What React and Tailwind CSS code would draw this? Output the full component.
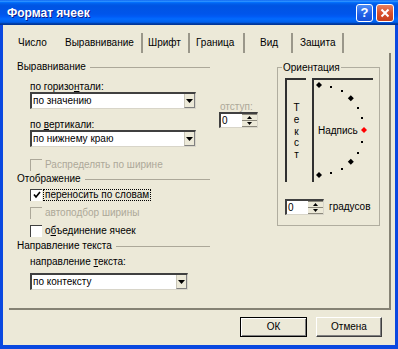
import React from "react";

const Tri = ({ up }) => (
  <svg width="7" height="4" viewBox="0 0 7 4" className="block">
    {up ? <polygon points="3.5,0 7,4 0,4" fill="#000" /> : <polygon points="0,0 7,0 3.5,4" fill="#000" />}
  </svg>
);

const SmallTri = ({ up }) => (
  <svg width="5" height="3" viewBox="0 0 5 3" className="block">
    {up ? <polygon points="2.5,0 5,3 0,3" fill="#000" /> : <polygon points="0,0 5,0 2.5,3" fill="#000" />}
  </svg>
);

const Dropdown = ({ w, text }) => (
  <div className={`${w} h-[17px] flex items-stretch bg-white border-l-2 border-t-2 border-r border-b border-l-[#404040] border-t-[#404040] border-r-[#d8d5c9] border-b-[#d8d5c9]`}>
    <span className="flex-1 flex items-center pl-[1px]">{text}</span>
    <div className="w-[11px] flex items-center justify-center bg-[#ECE9D8] border-l border-l-[#c9c6b8] border-b border-b-[#808080] border-r border-r-[#808080]">
      <Tri />
    </div>
  </div>
);

const Spin = ({ w }) => (
  <div className={`${w} h-[16px] flex items-stretch bg-white border-l-2 border-t-2 border-r border-b border-l-[#404040] border-t-[#404040] border-r-[#d8d5c9] border-b-[#d8d5c9]`}>
    <span className="flex-1 flex items-center pl-[1px]">0</span>
    <div className="w-[15px] flex flex-col bg-[#ECE9D8]">
      <div className="flex-1 flex items-center justify-center border-t border-[#8d8a7d]">
        <SmallTri up />
      </div>
      <div className="flex-1 flex items-center justify-center border-t border-b border-[#8d8a7d]">
        <SmallTri />
      </div>
    </div>
  </div>
);

const Heading = ({ children, mt }) => (
  <div className={`${mt} h-[14px] flex items-center`}>
    <span>{children}</span>
    <div className="flex-1 h-px bg-[#aca899] ml-[4px]" />
  </div>
);

const CheckBox = ({ checked, disabled }) => (
  <div className={`w-[12px] h-[12px] flex items-center justify-center border-l border-t ${disabled ? "border-[#aca899] bg-[#ECE9D8]" : "border-[#404040] bg-white"}`}>
    {checked && (
      <svg width="8" height="8" viewBox="0 0 8 8">
        <path d="M1 3.5 L3 6 L7 1" stroke="#000" strokeWidth="1.7" fill="none" />
      </svg>
    )}
  </div>
);

const Dial = () => {
  const pts = [];
  for (let a = 90; a >= -90; a -= 15) {
    const r = (a * Math.PI) / 180;
    pts.push({ a, x: 5 + 45 * Math.cos(r), y: 50 - 45 * Math.sin(r) });
  }
  return (
    <svg className="absolute inset-0" width="59" height="102" viewBox="0 0 59 102">
      {pts.map((p) => {
        if (p.a === 0)
          return <polygon key={p.a} points={`${p.x},${p.y - 3} ${p.x + 3},${p.y} ${p.x},${p.y + 3} ${p.x - 3},${p.y}`} fill="#ff0000" />;
        if (p.a % 45 === 0)
          return <polygon key={p.a} points={`${p.x},${p.y - 3} ${p.x + 3},${p.y} ${p.x},${p.y + 3} ${p.x - 3},${p.y}`} fill="#000" />;
        return <rect key={p.a} x={Math.round(p.x) - 1} y={Math.round(p.y) - 1} width="2" height="2" fill="#000" />;
      })}
    </svg>
  );
};

export default function App() {
  return (
    <div className="w-[398px] h-[349px] flex flex-col bg-[#0a48e0] font-['Liberation_Sans',Arial,sans-serif] text-[10px] leading-none text-black overflow-hidden">
      {/* Title bar */}
      <div className="h-[25px] shrink-0 flex items-center pl-[7px] pr-[4px] bg-[linear-gradient(to_bottom,#0058ee_0%,#3593ff_4%,#288eff_6%,#127dff_8%,#036ffc_10%,#0262ee_14%,#0057e5_20%,#0054e3_24%,#0055eb_56%,#005bf5_66%,#026afe_76%,#0062ef_86%,#0052d6_92%,#0040ab_94%,#003092_100%)]">
        <span className="flex-1 text-white font-bold text-[12px] [text-shadow:1px_1px_#0c1a8a]">Формат ячеек</span>
        <div className="w-[17px] h-[18px] rounded-[3px] border border-white bg-[linear-gradient(to_bottom,#4f8df5,#1f5fe6_60%,#1a52d8)] flex items-center justify-center text-white font-bold text-[13px]">?</div>
        <div className="w-[3px]" />
        <div className="w-[18px] h-[18px] rounded-[3px] border border-white bg-[linear-gradient(to_bottom,#e9805f,#d9502d_50%,#c53f1c)] flex items-center justify-center">
          <svg width="10" height="10" viewBox="0 0 10 10">
            <path d="M1.5 1.5 L8.5 8.5 M8.5 1.5 L1.5 8.5" stroke="#fff" strokeWidth="2" />
          </svg>
        </div>
      </div>

      {/* Body */}
      <div className="flex-1 mx-[3px] mb-[4px] bg-[#ECE9D8] flex flex-col">
        {/* Tabs */}
        <div className="mt-[8px] h-[20px] flex items-stretch">
          <span className="ml-[15px] w-[47px] flex items-center">Число</span>
          <span className="w-[76px] flex items-center">Выравнивание</span>
          <div className="w-[2px] bg-[#9a978a]" />
          <span className="w-[45px] pl-[5px] flex items-center">Шрифт</span>
          <div className="w-[2px] bg-[#9a978a]" />
          <span className="w-[53px] pl-[6px] flex items-center">Граница</span>
          <div className="w-[2px] bg-[#9a978a]" />
          <span className="w-[46px] pl-[15px] flex items-center">Вид</span>
          <div className="w-[2px] bg-[#9a978a]" />
          <span className="w-[49px] pl-[7px] flex items-center">Защита</span>
          <div className="w-[2px] bg-[#9a978a]" />
        </div>

        {/* Panel */}
        <div className="ml-[6px] w-[382px] h-[257px] border-r-2 border-b-2 border-[#858274] pt-[7px] pl-[8px] flex items-start">
          {/* Left column */}
          <div className="w-[193px] flex flex-col">
            <Heading mt="mt-0">Выравнивание</Heading>
            <div className="mt-[7px] h-[11px] pl-[13px] flex items-center">
              <span>по горизо<u>н</u>тали:</span>
            </div>
            <div className="pl-[13px]">
              <Dropdown w="w-[166px]" text="по значению" />
            </div>
            <div className="mt-[10px] h-[11px] pl-[13px] flex items-center">
              <span>по <u>в</u>ертикали:</span>
            </div>
            <div className="pl-[13px]">
              <Dropdown w="w-[166px]" text="по нижнему краю" />
            </div>
            <div className="mt-[11px] h-[13px] pl-[13px] flex items-center">
              <CheckBox disabled />
              <span className="ml-[3px] text-[#aca899]">Распределять по ширине</span>
            </div>
            <Heading mt="mt-[1px]">Отображение</Heading>
            <div className="mt-[2px] h-[13px] pl-[13px] flex items-center">
              <CheckBox checked />
              <span className="ml-[1px] h-[12px] px-[1px] flex items-center border border-dotted border-black">переносить по словам</span>
            </div>
            <div className="mt-[5px] h-[13px] pl-[13px] flex items-center">
              <CheckBox disabled />
              <span className="ml-[3px] text-[#aca899]">автоподбор ширины</span>
            </div>
            <div className="mt-[5px] h-[13px] pl-[13px] flex items-center">
              <CheckBox />
              <span className="ml-[3px]">о<u>б</u>ъединение ячеек</span>
            </div>
            <Heading mt="mt-[2px]">Направление текста</Heading>
            <div className="mt-[3px] h-[11px] pl-[13px] flex items-center">
              <span>направление <u>т</u>екста:</span>
            </div>
            <div className="mt-[6px] pl-[13px]">
              <Dropdown w="w-[158px]" text="по контексту" />
            </div>
          </div>

          {/* Middle column */}
          <div className="ml-[9px] w-[40px] flex flex-col">
            <div className="mt-[41px] h-[11px] pl-[1px] flex items-center text-[#aca899]">отступ:</div>
            <Spin w="w-[39px]" />
          </div>

          {/* Orientation */}
          <div className="ml-[18px] w-[103px] mt-[7px] h-[159px] relative border border-[#b0ad9f] pt-[10px] pl-[7px]">
            <span className="absolute left-[4px] -top-[6px] px-[1px] leading-[12px] bg-[#ECE9D8]">Ориентация</span>
            <div className="flex">
              <div className="w-[21px] h-[104px] border-l-2 border-t-2 border-[#303030] flex flex-col items-center pt-[22px]">
                {["Т", "е", "к", "с", "т"].map((c, i) => (
                  <span key={i} className="h-[11.75px] leading-[11.75px]">{c}</span>
                ))}
              </div>
              <div className="ml-[6px] w-[61px] h-[104px] relative border-l-2 border-t-2 border-[#303030] flex items-center pl-[4px]">
                <Dial />
                <span className="relative">Надпись</span>
              </div>
            </div>
            <div className="mt-[17px] flex items-center">
              <Spin w="w-[39px]" />
              <span className="ml-[5px]">градусов</span>
            </div>
          </div>
        </div>

        {/* Buttons */}
        <div className="mt-[7px] flex justify-end pr-[13px] gap-[9px]">
          <div className="w-[67px] h-[20px] border border-black shadow-[inset_1px_1px_#fff,inset_-1px_-1px_#808080] flex items-center justify-center">ОК</div>
          <div className="w-[66px] h-[20px] border-t border-l border-t-white border-l-white border-r border-b border-r-[#404040] border-b-[#404040] shadow-[inset_-1px_-1px_#808080] flex items-center justify-center">Отмена</div>
        </div>
      </div>
    </div>
  );
}
